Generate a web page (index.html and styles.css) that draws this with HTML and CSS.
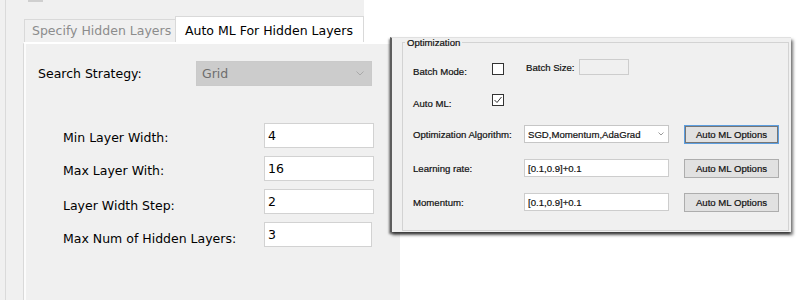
FILE: index.html
```html
<!DOCTYPE html>
<html lang="en">
<head>
    <meta charset="UTF-8">
    <meta name="viewport" content="width=device-width, initial-scale=1.0">
    <title>Auto ML For Hidden Layers</title>
    <link rel="stylesheet" href="styles.css">
</head>
<body>
    <div class="window">
        <div class="strip">
            <div class="strip-inner">
                <div class="stub"></div>
                <div class="tabs">
                    <div class="tab">Specify Hidden Layers</div>
                    <div class="tab active">Auto ML For Hidden Layers</div>
                </div>
            </div>
        </div>
        <div class="client">
            <div class="client-inner">
                <div class="tab-panel">
                    <div class="search-row">
                        <span class="search-label">Search Strategy:</span>
                        <div class="combo disabled">
                            <span>Grid</span>
                            <svg width="8" height="5" viewBox="0 0 8 5"><polyline points="0.5,0.5 4,4 7.5,0.5" fill="none" stroke="#a9a9a9" stroke-width="1"/></svg>
                        </div>
                    </div>
                    <div class="layer-grid">
                        <label for="minWidth">Min Layer Width:</label>
                        <input type="text" id="minWidth" value="4" readonly>
                        <label for="maxWidth">Max Layer With:</label>
                        <input type="text" id="maxWidth" value="16" readonly>
                        <label for="widthStep" class="lower">Layer Width Step:</label>
                        <input type="text" id="widthStep" value="2" readonly>
                        <label for="maxLayers" class="lower">Max Num of Hidden Layers:</label>
                        <input type="text" id="maxLayers" class="narrow" value="3" readonly>
                    </div>
                </div>
            </div>
        </div>
    </div>

    <div class="overlay">
        <fieldset class="group">
            <legend>Optimization</legend>
            <div class="opt-grid">
                <span class="opt-label first">Batch Mode:</span>
                <span class="check first"></span>
                <div class="batch-size first">
                    <span class="batch-label">Batch Size:</span>
                    <span class="field disabled"></span>
                </div>

                <span class="opt-label second">Auto ML:</span>
                <span class="check checked">
                    <svg width="10" height="10" viewBox="0 0 10 10"><polyline points="1.5,5 4,7.5 8.5,2" fill="none" stroke="#333" stroke-width="1"/></svg>
                </span>

                <span class="opt-label wide">Optimization Algorithm:</span>
                <div class="opt-combo">
                    <span>SGD,Momentum,AdaGrad</span>
                    <svg width="6" height="4" viewBox="0 0 6 4"><polyline points="0.5,0.5 3,3 5.5,0.5" fill="none" stroke="#9a9a9a" stroke-width="1"/></svg>
                </div>
                <button class="opt-button focused">Auto ML Options</button>

                <span class="opt-label wide">Learning rate:</span>
                <span class="field">[0.1,0.9]+0.1</span>
                <button class="opt-button">Auto ML Options</button>

                <span class="opt-label wide">Momentum:</span>
                <span class="field">[0.1,0.9]+0.1</span>
                <button class="opt-button">Auto ML Options</button>
            </div>
        </fieldset>
    </div>
</body>
</html>
```

FILE: styles.css
```css
body {
    margin: 0;
    width: 800px;
    height: 300px;
    position: relative;
    overflow: hidden;
    background: #fff;
    font-family: "DejaVu Sans", Verdana, sans-serif;
    font-size: 12.5px;
    color: #000;
}

.window {
    width: 400px;
    height: 300px;
    display: flex;
    flex-direction: column;
}

/* tab strip */
.strip {
    width: 364px;
    height: 42px;
    box-sizing: border-box;
    padding-left: 5px;
    background: #f0f0f0;
}

.strip-inner {
    height: 100%;
    display: flex;
    flex-direction: column;
    border-left: 1px solid #dadada;
    padding-left: 18px;
}

.stub {
    width: 15px;
    height: 2px;
    margin-left: 4px;
    background: #cfcfcf;
}

.tabs {
    margin-top: auto;
    display: flex;
    align-items: flex-end;
    line-height: 10px;
    white-space: nowrap;
}

.tab {
    box-sizing: border-box;
    width: 152px;
    padding: 6px 0 6px 7px;
    border-top: 1px solid #d9d9d9;
    border-left: 1px solid #d9d9d9;
    color: #8c8c8c;
}

.tab.active {
    width: 189px;
    margin-left: -1px;
    padding: 9px 0 6px 9px;
    background: #fff;
    border-right: 1px solid #d9d9d9;
    color: #000;
}

/* tab page */
.client {
    flex: 1;
    box-sizing: border-box;
    padding-left: 5px;
    background: #f0f0f0;
    overflow: hidden;
}

.client-inner {
    height: 100%;
    border-left: 1px solid #dadada;
    padding-left: 17px;
}

.tab-panel {
    width: 420px;
    height: 100%;
    box-sizing: border-box;
    border-top: 2px solid #fff;
    border-left: 1px solid #d9d9d9;
    box-shadow: inset 2px 0 0 #fbfbfb;
    padding: 17px 0 0 14px;
}

.search-row {
    display: flex;
    align-items: center;
    height: 25px;
}

.search-label {
    width: 158px;
}

.combo {
    box-sizing: border-box;
    width: 176px;
    height: 25px;
    display: flex;
    align-items: center;
    justify-content: space-between;
    padding: 0 7px 0 5px;
}

.combo.disabled {
    background: #cccccc;
    border: 1px solid #cacaca;
    color: #6e6e6e;
}

.layer-grid {
    margin: 37px 0 0 25px;
    display: grid;
    grid-template-columns: 201px 110px;
    grid-auto-rows: 25px;
    row-gap: 8px;
    align-items: center;
}

.layer-grid label {
    padding-top: 3px;
}

.layer-grid label.lower {
    padding-top: 7px;
}

.layer-grid input {
    box-sizing: border-box;
    width: 110px;
    height: 25px;
    margin: 0;
    padding: 0 3px;
    border: 1px solid #d2d2d2;
    background: #fff;
    font: inherit;
    color: #000;
    outline: none;
}

.layer-grid input.narrow {
    width: 108px;
}

/* pasted optimization panel */
.overlay {
    position: absolute;
    left: 390px;
    top: 37px;
    width: 401px;
    height: 195px;
    box-sizing: border-box;
    padding: 0 2px 2px 10px;
    background: #f0f0f0;
    border-top: 1px solid #e0e0e0;
    border-left: 2px solid #5e5e5e;
    box-shadow: -1px 2px 2px rgba(0, 0, 0, 0.5), 2px 3px 3px rgba(0, 0, 0, 0.55);
    font-family: "Liberation Sans", Arial, sans-serif;
    font-size: 9.6px;
    color: #111;
    -webkit-text-stroke: 0.2px #111;
}

.group {
    box-sizing: border-box;
    height: 193px;
    margin: 0;
    padding: 0;
    border: 1px solid #d3d3d3;
}

.group legend {
    margin-left: 2px;
    padding: 0 2px;
    line-height: 9px;
}

.opt-grid {
    display: grid;
    grid-template-columns: 79px 32px 160px 95px;
    grid-auto-rows: 34px;
    align-items: center;
    padding: 2px 0 0 10px;
}

.opt-label {
    grid-column: 1;
}

.opt-label.first {
    align-self: end;
    margin-bottom: 6px;
}

.opt-label.second {
    padding-top: 7px;
}

.opt-label.wide {
    grid-column: 1 / span 2;
}

.check {
    box-sizing: border-box;
    width: 12px;
    height: 12px;
    border: 1px solid #333;
    background: #fff;
    display: flex;
    align-items: center;
    justify-content: center;
}

.check.first {
    align-self: end;
    margin-bottom: 8px;
}

.batch-size {
    grid-column: 3 / span 2;
    display: flex;
    align-items: center;
    padding-left: 2px;
}

.batch-size.first {
    align-self: end;
    margin-bottom: 8px;
}

.batch-label {
    width: 53px;
}

.field {
    box-sizing: border-box;
    width: 145px;
    height: 18px;
    display: flex;
    align-items: center;
    padding: 0 3px;
    border: 1px solid #cdcdcd;
    background: #fff;
    white-space: nowrap;
}

.field.disabled {
    width: 50px;
    height: 16px;
    background: #f0f0f0;
}

.opt-combo {
    box-sizing: border-box;
    width: 145px;
    height: 18px;
    display: flex;
    align-items: center;
    justify-content: space-between;
    padding: 0 4px 0 3px;
    border: 1px solid #c6c6c6;
    background: #fff;
}

.opt-button {
    box-sizing: border-box;
    width: 95px;
    height: 19px;
    margin: 0;
    padding: 0;
    border: 1px solid #adadad;
    background: #e1e1e1;
    font: inherit;
    color: #111;
}

.opt-button.focused {
    border-color: #5c9ee0;
    box-shadow: inset 0 0 0 1px #767676;
}
```
